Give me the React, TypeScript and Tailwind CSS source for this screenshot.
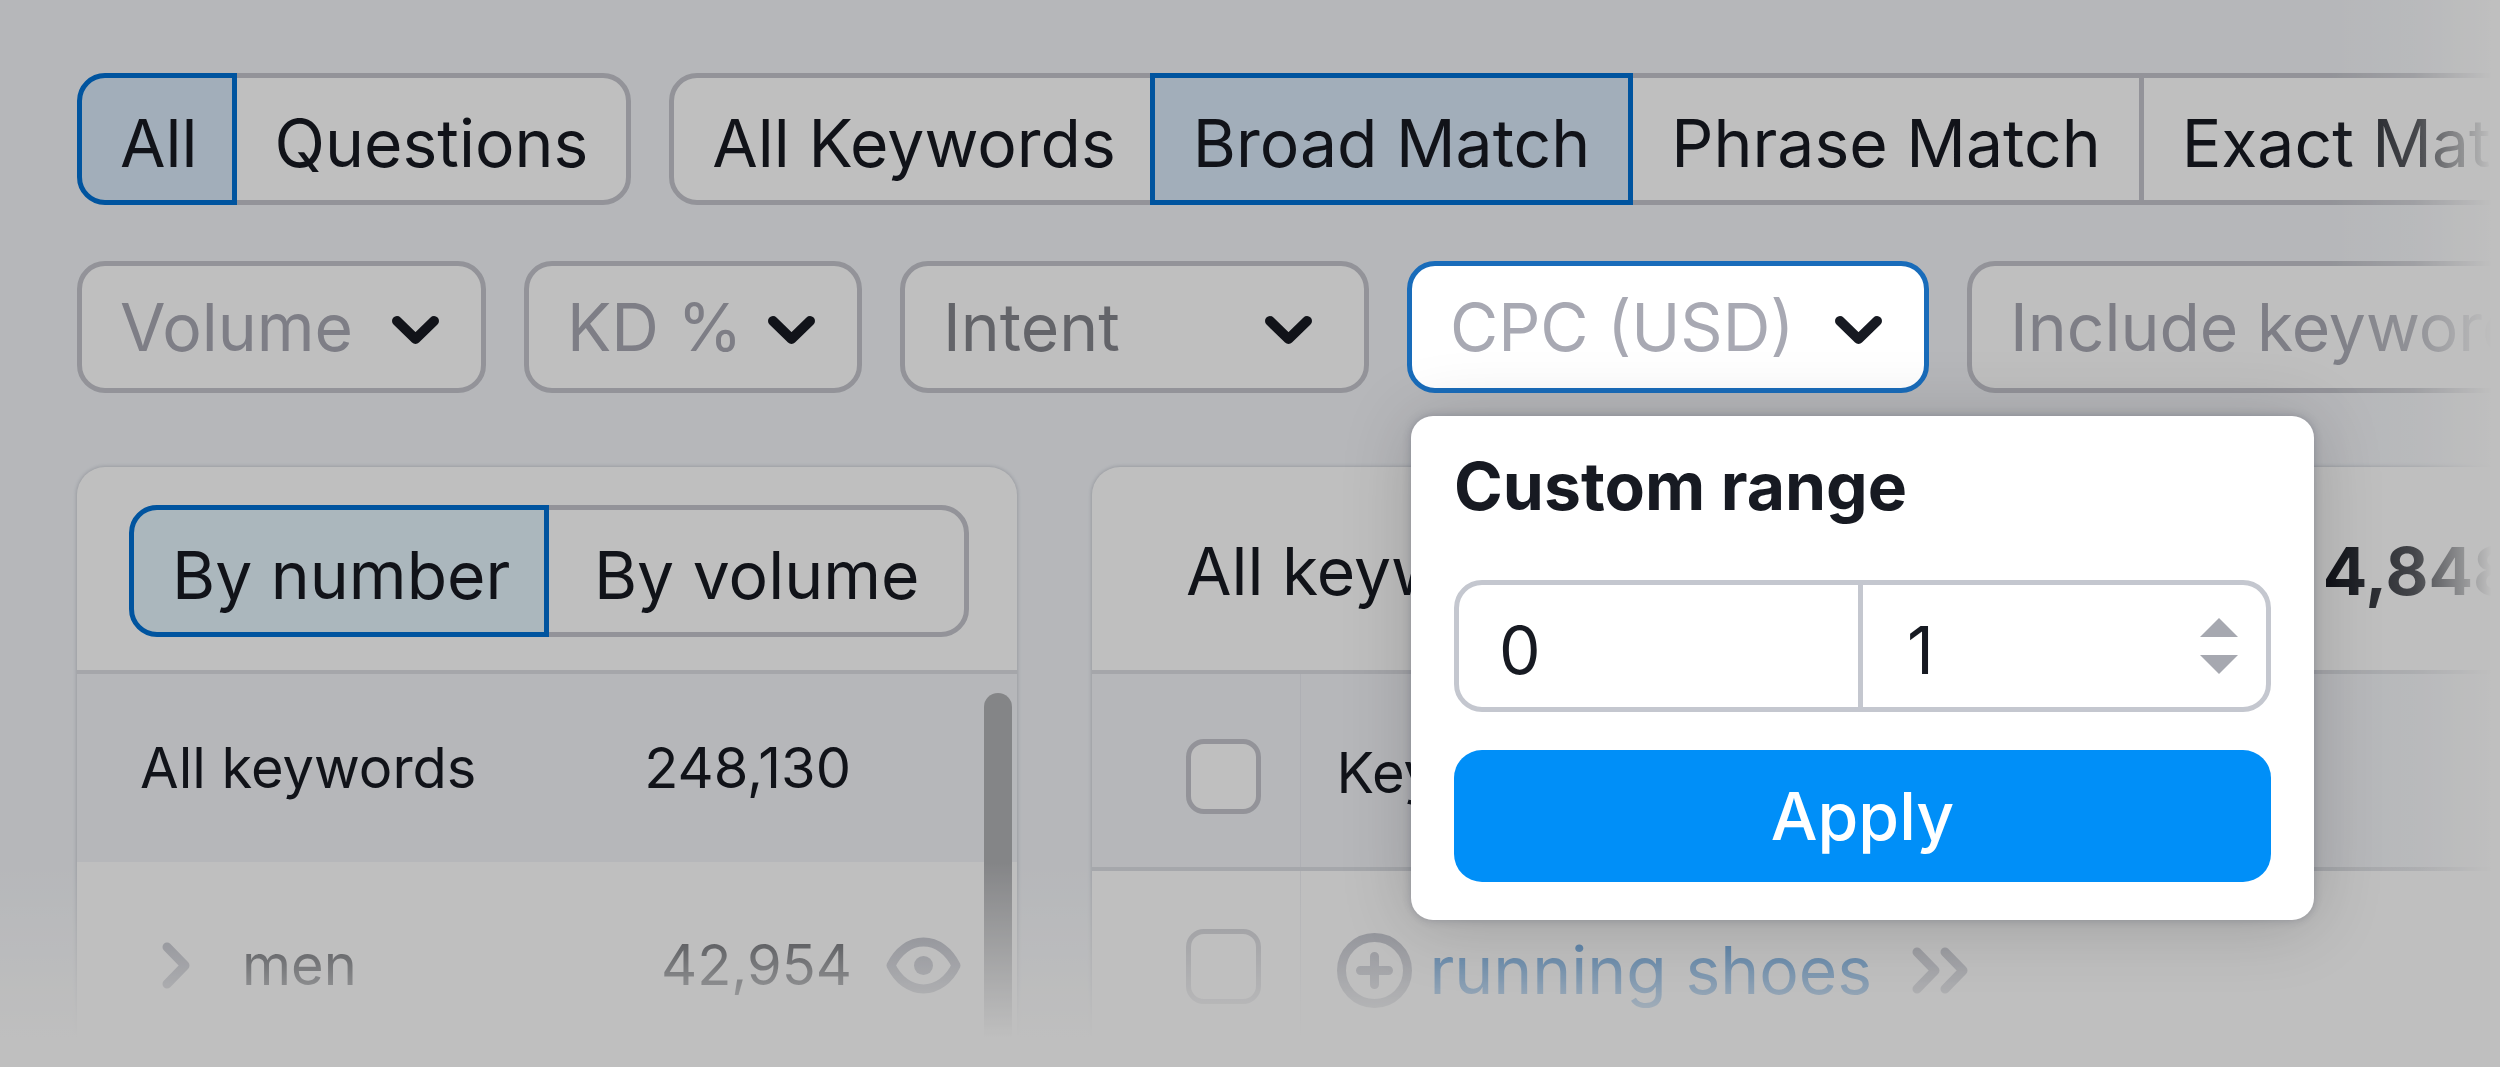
import { useState } from "react";
import clsx from "clsx";

const field =
  "flex h-[132px] shrink-0 items-center justify-between rounded-[28px] border-[5px] pl-[38px]";
const idleField = "border-[#c4c5cc] bg-white";

function ChevronDown() {
  return (
    <svg className="mt-1.5" width="47" height="30" viewBox="0 0 47 30" fill="none" aria-hidden="true">
      <path
        d="M5 6 23.500 24 42 6"
        stroke="#171a22"
        strokeWidth="10"
        strokeLinecap="round"
        strokeLinejoin="round"
      />
    </svg>
  );
}

function ChevronRight() {
  return (
    <svg width="28" height="47" viewBox="0 0 28 47" fill="none" aria-hidden="true">
      <path
        d="M5 5 23 23.500 5 42"
        stroke="#a3a6b3"
        strokeWidth="9"
        strokeLinecap="round"
        strokeLinejoin="round"
      />
    </svg>
  );
}

function EyeIcon() {
  return (
    <svg width="75" height="57" viewBox="0 0 75 57" fill="none" aria-hidden="true">
      <path
        d="M5 28.500C12 14 24 5 37.500 5S63 14 70 28.500C63 43 51 52 37.500 52S12 43 5 28.500Z"
        stroke="#a3a6b3"
        strokeWidth="9"
        strokeLinejoin="round"
      />
      <circle cx="37.500" cy="28.500" r="9.500" fill="#a3a6b3" />
    </svg>
  );
}

function PlusCircle() {
  return (
    <svg width="75" height="75" viewBox="0 0 75 75" fill="none" aria-hidden="true">
      <circle cx="37.500" cy="37.500" r="33" stroke="#a3a6b3" strokeWidth="9" />
      <path d="M37.500 23.500v28M23.500 37.500h28" stroke="#a3a6b3" strokeWidth="9" strokeLinecap="round" />
    </svg>
  );
}

type SegmentedProps = {
  label: string;
  options: string[];
  initial: string;
  className?: string;
  activeClass?: string;
};

function Segmented({ label, options, initial, className, activeClass = "bg-[#d9e9f8]" }: SegmentedProps) {
  const [active, setActive] = useState(initial);

  return (
    <div role="group" aria-label={label} className={clsx("flex h-[132px] shrink-0", className)}>
      {options.map((option) => (
        <button
          key={option}
          type="button"
          aria-pressed={option === active}
          onClick={() => setActive(option)}
          className={clsx(
            "-ml-[5px] border-[5px] px-[38px] pt-2 first:ml-0 first:rounded-l-[28px] first:pr-[34px] last:grow last:rounded-r-[28px]",
            option === active
              ? `relative border-[#0070d4] ${activeClass}`
              : "border-[#c4c5cc] bg-white"
          )}
        >
          {option}
        </button>
      ))}
    </div>
  );
}

function RangePopover() {
  return (
    <div className="absolute top-full left-1 mt-[23px] flex w-[903px] flex-col rounded-[22px] bg-white px-[43px] pt-[30px] pb-[38px] text-[#171a22] shadow-[0_0_8px_rgba(40,45,70,0.25),0_4px_70px_rgba(0,0,0,0.18)]">
      <h2 className="text-[66px] leading-[80px] font-bold">Custom range</h2>
      <div className="mt-[54px] flex h-[132px]">
        <input
          type="text"
          aria-label="From"
          defaultValue="0"
          className="w-[409px] rounded-l-[28px] border-[5px] border-[#c4c7cf] px-10 pt-2"
        />
        <div className="-ml-[5px] flex min-w-0 flex-1 items-center rounded-r-[28px] border-[5px] border-[#c4c7cf] pr-7">
          <input type="text" aria-label="To" defaultValue="1" className="h-full min-w-0 flex-1 pt-2 pl-11" />
          <div className="flex shrink-0 flex-col gap-[18px]">
            <button type="button" aria-label="Increase">
              <svg width="38" height="19" viewBox="0 0 38 19">
                <path d="M19 0 38 19H0Z" fill="#a6a8b0" />
              </svg>
            </button>
            <button type="button" aria-label="Decrease">
              <svg width="38" height="19" viewBox="0 0 38 19">
                <path d="M0 0h38L19 19Z" fill="#a6a8b0" />
              </svg>
            </button>
          </div>
        </div>
      </div>
      <button type="button" className="mt-[38px] h-[132px] rounded-[28px] bg-[#008ff8] font-medium text-white">
        Apply
      </button>
    </div>
  );
}

function Filters() {
  return (
    <div className="mt-14 flex gap-[38px] text-[#a8a9b3]">
      <button type="button" className={`${field} ${idleField} w-[409px] pr-[42px]`}>
        Volume <ChevronDown />
      </button>
      <button type="button" className={`${field} ${idleField} w-[338px] pr-[42px]`}>
        KD % <ChevronDown />
      </button>
      <button type="button" className={`${field} ${idleField} w-[469px] pr-[52px] text-[#85868d]`}>
        Intent <ChevronDown />
      </button>
      <div className="relative z-20 shrink-0">
        <button type="button" aria-expanded="true" className={`${field} w-[522px] border-[#196cba] bg-white pr-[42px]`}>
          CPC (USD) <ChevronDown />
        </button>
        <RangePopover />
      </div>
      <button type="button" className={`${field} ${idleField} pr-[42px]`}>
        Include keywords <ChevronDown />
      </button>
    </div>
  );
}

function Groups() {
  return (
    <aside className="relative w-[940px] shrink-0 overflow-hidden rounded-t-[28px] bg-white shadow-[0_0_4px_rgba(60,65,90,0.3)]">
      <div className="flex border-b-4 border-[#dcdee3] pt-[38px] pr-12 pb-[33px] pl-[52px]">
        <Segmented
          label="Sort groups"
          options={["By number", "By volume"]}
          initial="By number"
          className="grow"
          activeClass="bg-[#e5f4fc]"
        />
      </div>
      <ul className="text-[56px]">
        <li className="flex h-[188px] items-center justify-between bg-[#f3f5f9] pr-[166px] pl-[63px]">
          <span>All keywords</span>
          <span>248,130</span>
        </li>
        <li className="flex h-[206px] items-center pr-14 pl-[85px]">
          <button type="button" aria-label="Expand men">
            <ChevronRight />
          </button>
          <span className="ml-[52px] flex-1">men</span>
          <span>42,954</span>
          <button type="button" aria-label="Hide men" className="ml-[34px]">
            <EyeIcon />
          </button>
        </li>
      </ul>
      <div className="absolute top-[226px] right-[5px] bottom-0 w-7 rounded-t-full bg-[#b1b2b5]" />
    </aside>
  );
}

const checkbox =
  "block size-[75px] appearance-none rounded-[18px] border-[5px] border-[#c4c5cc] bg-white";

function Results() {
  return (
    <section className="min-w-0 flex-1 overflow-hidden rounded-tl-[28px] bg-white shadow-[0_0_4px_rgba(60,65,90,0.3)]">
      <header className="flex h-[207px] items-center justify-between border-b-4 border-[#dcdee3] pt-1 pl-[94px]">
        <span>All keywords:</span>
        <b className="-mr-4 font-bold">4,848</b>
      </header>
      <table className="w-full border-collapse text-left">
        <thead>
          <tr className="h-[195px] border-b-4 border-[#dcdee3] bg-[#f3f5f9] text-[56px]">
            <th className="w-[208px] border-r border-[#e8eaf0] pt-3 pl-[94px]">
              <input type="checkbox" aria-label="Select all" className={checkbox} />
            </th>
            <th className="pt-1 pl-9 font-normal">Keyword</th>
          </tr>
        </thead>
        <tbody>
          <tr className="h-[192px]">
            <td className="border-r border-[#eff0f4] pl-[94px]">
              <input type="checkbox" aria-label="Select running shoes" className={checkbox} />
            </td>
            <td className="pt-2 pl-9">
              <div className="flex items-center">
                <button type="button" aria-label="Add running shoes">
                  <PlusCircle />
                </button>
                <a href="#running-shoes" className="mr-10 ml-[18px] text-[#0f6ec9]">
                  running shoes
                </a>
                <ChevronRight />
                <ChevronRight />
              </div>
            </td>
          </tr>
        </tbody>
      </table>
    </section>
  );
}

export default function App() {
  return (
    <div className="relative flex min-h-screen flex-col overflow-hidden bg-[#f3f5f9] pt-[73px] pl-[77px] font-['Inter',sans-serif] text-[66px] leading-[80px] whitespace-nowrap text-[#171a22]">
      <div className="flex gap-[38px]">
        <Segmented label="Query type" options={["All", "Questions"]} initial="All" />
        <Segmented
          label="Match type"
          options={["All Keywords", "Broad Match", "Phrase Match", "Exact Match"]}
          initial="Broad Match"
        />
      </div>

      <Filters />

      <main className="mt-[74px] flex flex-1 gap-[75px]">
        <Groups />
        <Results />
      </main>

      {/* edge fades, then the dimmed backdrop under the open filter */}
      <div className="pointer-events-none absolute inset-y-0 right-0 z-10 w-[170px] bg-linear-to-r from-white/0 via-white/30 via-50% to-white to-95%" />
      <div className="pointer-events-none absolute inset-x-0 bottom-0 z-10 h-[205px] bg-linear-to-b from-white/0 to-white to-85%" />
      <div className="pointer-events-none absolute inset-0 z-10 bg-black/25" />
    </div>
  );
}
